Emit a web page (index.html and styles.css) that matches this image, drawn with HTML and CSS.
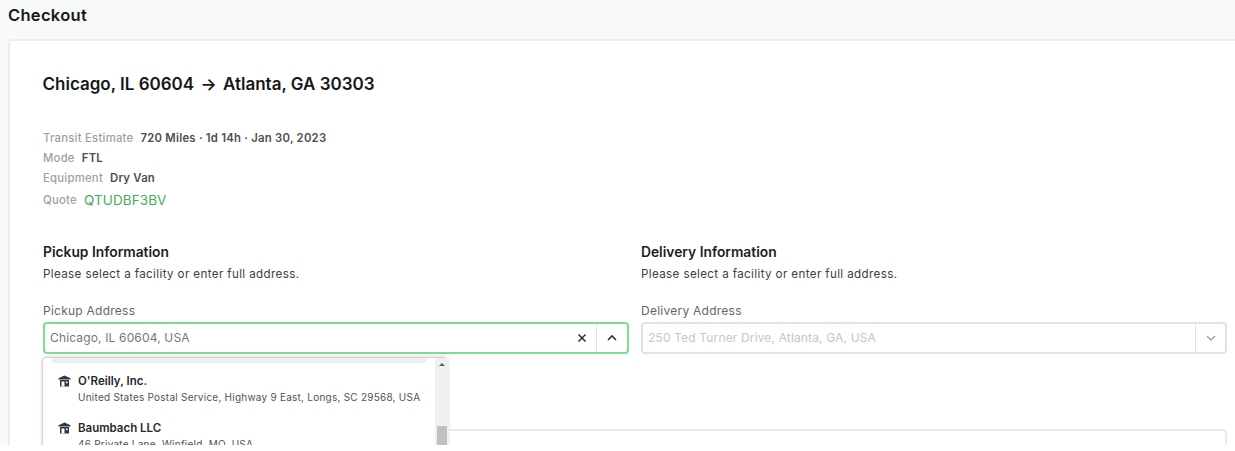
FILE: index.html
```html
<!DOCTYPE html>
<html lang="en">
<head>
<meta charset="utf-8">
<title>Checkout</title>
<link rel="stylesheet" href="styles.css">
</head>
<body>
<div class="page">
  <h1 class="title">Checkout</h1>
  <main class="card">
    <h2 class="route">Chicago, IL 60604 <span class="arrow">→</span> Atlanta, GA 30303</h2>
    <dl class="meta">
      <div class="meta-row"><dt>Transit Estimate</dt><dd>720 Miles · 1d 14h · Jan 30, 2023</dd></div>
      <div class="meta-row"><dt>Mode</dt><dd>FTL</dd></div>
      <div class="meta-row"><dt>Equipment</dt><dd>Dry Van</dd></div>
      <div class="meta-row quote"><dt>Quote</dt><dd class="code">QTUDBF3BV</dd></div>
    </dl>
    <div class="columns">
      <section class="col">
        <h3 class="sec-title">Pickup Information</h3>
        <p class="sec-hint">Please select a facility or enter full address.</p>
        <label class="field-label">Pickup Address</label>
        <div class="select focused">
          <span class="value">Chicago, IL 60604, USA</span>
          <span class="clear"><svg width="10" height="10" viewBox="0 0 10 10"><path d="M1.5 1.5l7 7M8.5 1.5l-7 7" stroke="#2b2f33" stroke-width="1.5" fill="none"/></svg></span>
          <span class="toggle"><svg width="12" height="8" viewBox="0 0 12 8"><path d="M2 6l4-4 4 4" stroke="#2b2f33" stroke-width="1.6" fill="none"/></svg></span>
        </div>
        <div class="menu">
          <div class="menu-list">
            <div class="menu-top"></div>
            <div class="option">
              <svg class="fac" width="13" height="12" viewBox="0 0 13 12"><path d="M0.5 3.2L6.5 0.5l6 2.7v1.2H.5zM2 5h9v6.5H2z" fill="#33373b"/><path d="M3.5 6.5h3v5h-3zM8 6.5h1.6v1.8H8z" fill="#fff"/></svg>
              <div><div class="opt-name">O'Reilly, Inc.</div><div class="opt-addr">United States Postal Service, Highway 9 East, Longs, SC 29568, USA</div></div>
            </div>
            <div class="option">
              <svg class="fac" width="13" height="12" viewBox="0 0 13 12"><path d="M0.5 3.2L6.5 0.5l6 2.7v1.2H.5zM2 5h9v6.5H2z" fill="#33373b"/><path d="M3.5 6.5h3v5h-3zM8 6.5h1.6v1.8H8z" fill="#fff"/></svg>
              <div><div class="opt-name">Baumbach LLC</div><div class="opt-addr">46 Private Lane, Winfield, MO, USA</div></div>
            </div>
          </div>
          <div class="scrollbar"><span class="scroll-up"></span><span class="thumb"></span></div>
        </div>
      </section>
      <section class="col">
        <h3 class="sec-title">Delivery Information</h3>
        <p class="sec-hint">Please select a facility or enter full address.</p>
        <label class="field-label">Delivery Address</label>
        <div class="select">
          <span class="value placeholder">250 Ted Turner Drive, Atlanta, GA, USA</span>
          <span class="toggle"><svg width="12" height="8" viewBox="0 0 12 8"><path d="M2 2l4 4 4-4" stroke="#9a9da0" stroke-width="1.3" fill="none"/></svg></span>
        </div>
      </section>
    </div>
    <div class="next-box"></div>
  </main>
</div>
</body>
</html>
```
FILE: styles.css
```css
* { box-sizing: border-box; }
html, body { margin: 0; padding: 0; background: #fff; }
body { font-family: Inter, "Noto Sans", sans-serif; color: #1c1f22; overflow: hidden; }
.page { height: 445px; overflow: hidden; background: #f8f9f9; }
.title { margin: 0; height: 39px; padding: 5px 0 0 8px; font-size: 16.5px; line-height: 20px; font-weight: 600; letter-spacing: .3px; color: #17191b; }
.card { position: relative; margin-left: 8px; padding: 31px 8px 0 33px; height: 420px; background: #fff; border: 2px solid #ededed; border-right: 0; border-bottom: 0; border-top-left-radius: 4px; }
.route { margin: 0 0 0 -.5px; font-size: 17px; line-height: 24px; font-weight: 600; color: #16181a; }
.arrow { margin: 0 2px; }
.meta { margin: 32px 0 0; line-height: 20px; font-weight: 500; }
.meta-row { display: flex; gap: 7px; height: 20px; font-size: 11.3px; letter-spacing: .25px; }
.meta dt { color: #9b9fa4; }
.meta dd { margin: 0; color: #4a4e52; font-weight: 600; }
.quote { height: 22px; align-items: center; margin-top: 1px; }
.meta .code { color: #46ae5a; font-size: 13.5px; font-weight: 400; letter-spacing: .1px; }
.columns { display: grid; grid-template-columns: 586px 586px; gap: 12px; margin-top: 31px; }
.col { position: relative; }
.sec-title { margin: 0; font-size: 13.8px; line-height: 20px; font-weight: 600; color: #1c1f22; }
.sec-hint { margin: 3px 0 0; font-size: 11.6px; line-height: 18px; letter-spacing: .38px; color: #3c4044; }
.field-label { display: block; margin-top: 19px; font-size: 12px; line-height: 18px; letter-spacing: .25px; color: #63676b; }
.select { display: flex; align-items: stretch; height: 32px; margin-top: 2px; border: 2px solid #e2e2e2; border-radius: 4px; background: #fff; }
.select.focused { border-color: #7ddc90; }
.value { flex: 1; padding-left: 5px; font-size: 12px; line-height: 28px; letter-spacing: .15px; color: #73777b; white-space: nowrap; }
.placeholder { color: #c4c6c8; }
.clear { display: flex; align-items: center; justify-content: center; width: 28px; }
.toggle { display: flex; align-items: center; justify-content: center; width: 30px; border-left: 1px solid #e4e4e4; }
.focused .toggle { width: 31px; }
.menu { position: absolute; z-index: 2; left: 0; top: 116px; display: flex; width: 404px; height: 100px; background: #fff; border-radius: 4px; box-shadow: 0 0 3px 1px rgba(0,0,0,.25); }
.menu-list { flex: 1; padding: 0 8px; }
.menu-top { height: 5px; background: #eceeef; border-radius: 0 0 4px 4px; }
.option { display: flex; gap: 7px; padding: 11px 7px 0; height: 49px; }
.option + .option { height: 50px; padding-top: 9px; }
.fac { flex: none; margin-top: 1px; }
.opt-name { font-size: 11.5px; line-height: 15px; font-weight: 600; color: #25282b; }
.opt-addr { margin-top: 1px; font-size: 10px; line-height: 14px; letter-spacing: .24px; color: #4f5357; white-space: nowrap; }
.scrollbar { position: relative; flex: none; width: 14px; background: #f0f0f0; }
.scroll-up { position: absolute; left: 4px; top: 5px; border: 3px solid transparent; border-top: 0; border-bottom: 3px solid #5a5a5a; }
.thumb { position: absolute; left: 2px; top: 68px; width: 10px; height: 32px; background: #c0c0c0; }
.next-box { height: 40px; margin-top: 75px; border: 2px solid #ebebeb; border-radius: 4px; width: 1184px; }
```
